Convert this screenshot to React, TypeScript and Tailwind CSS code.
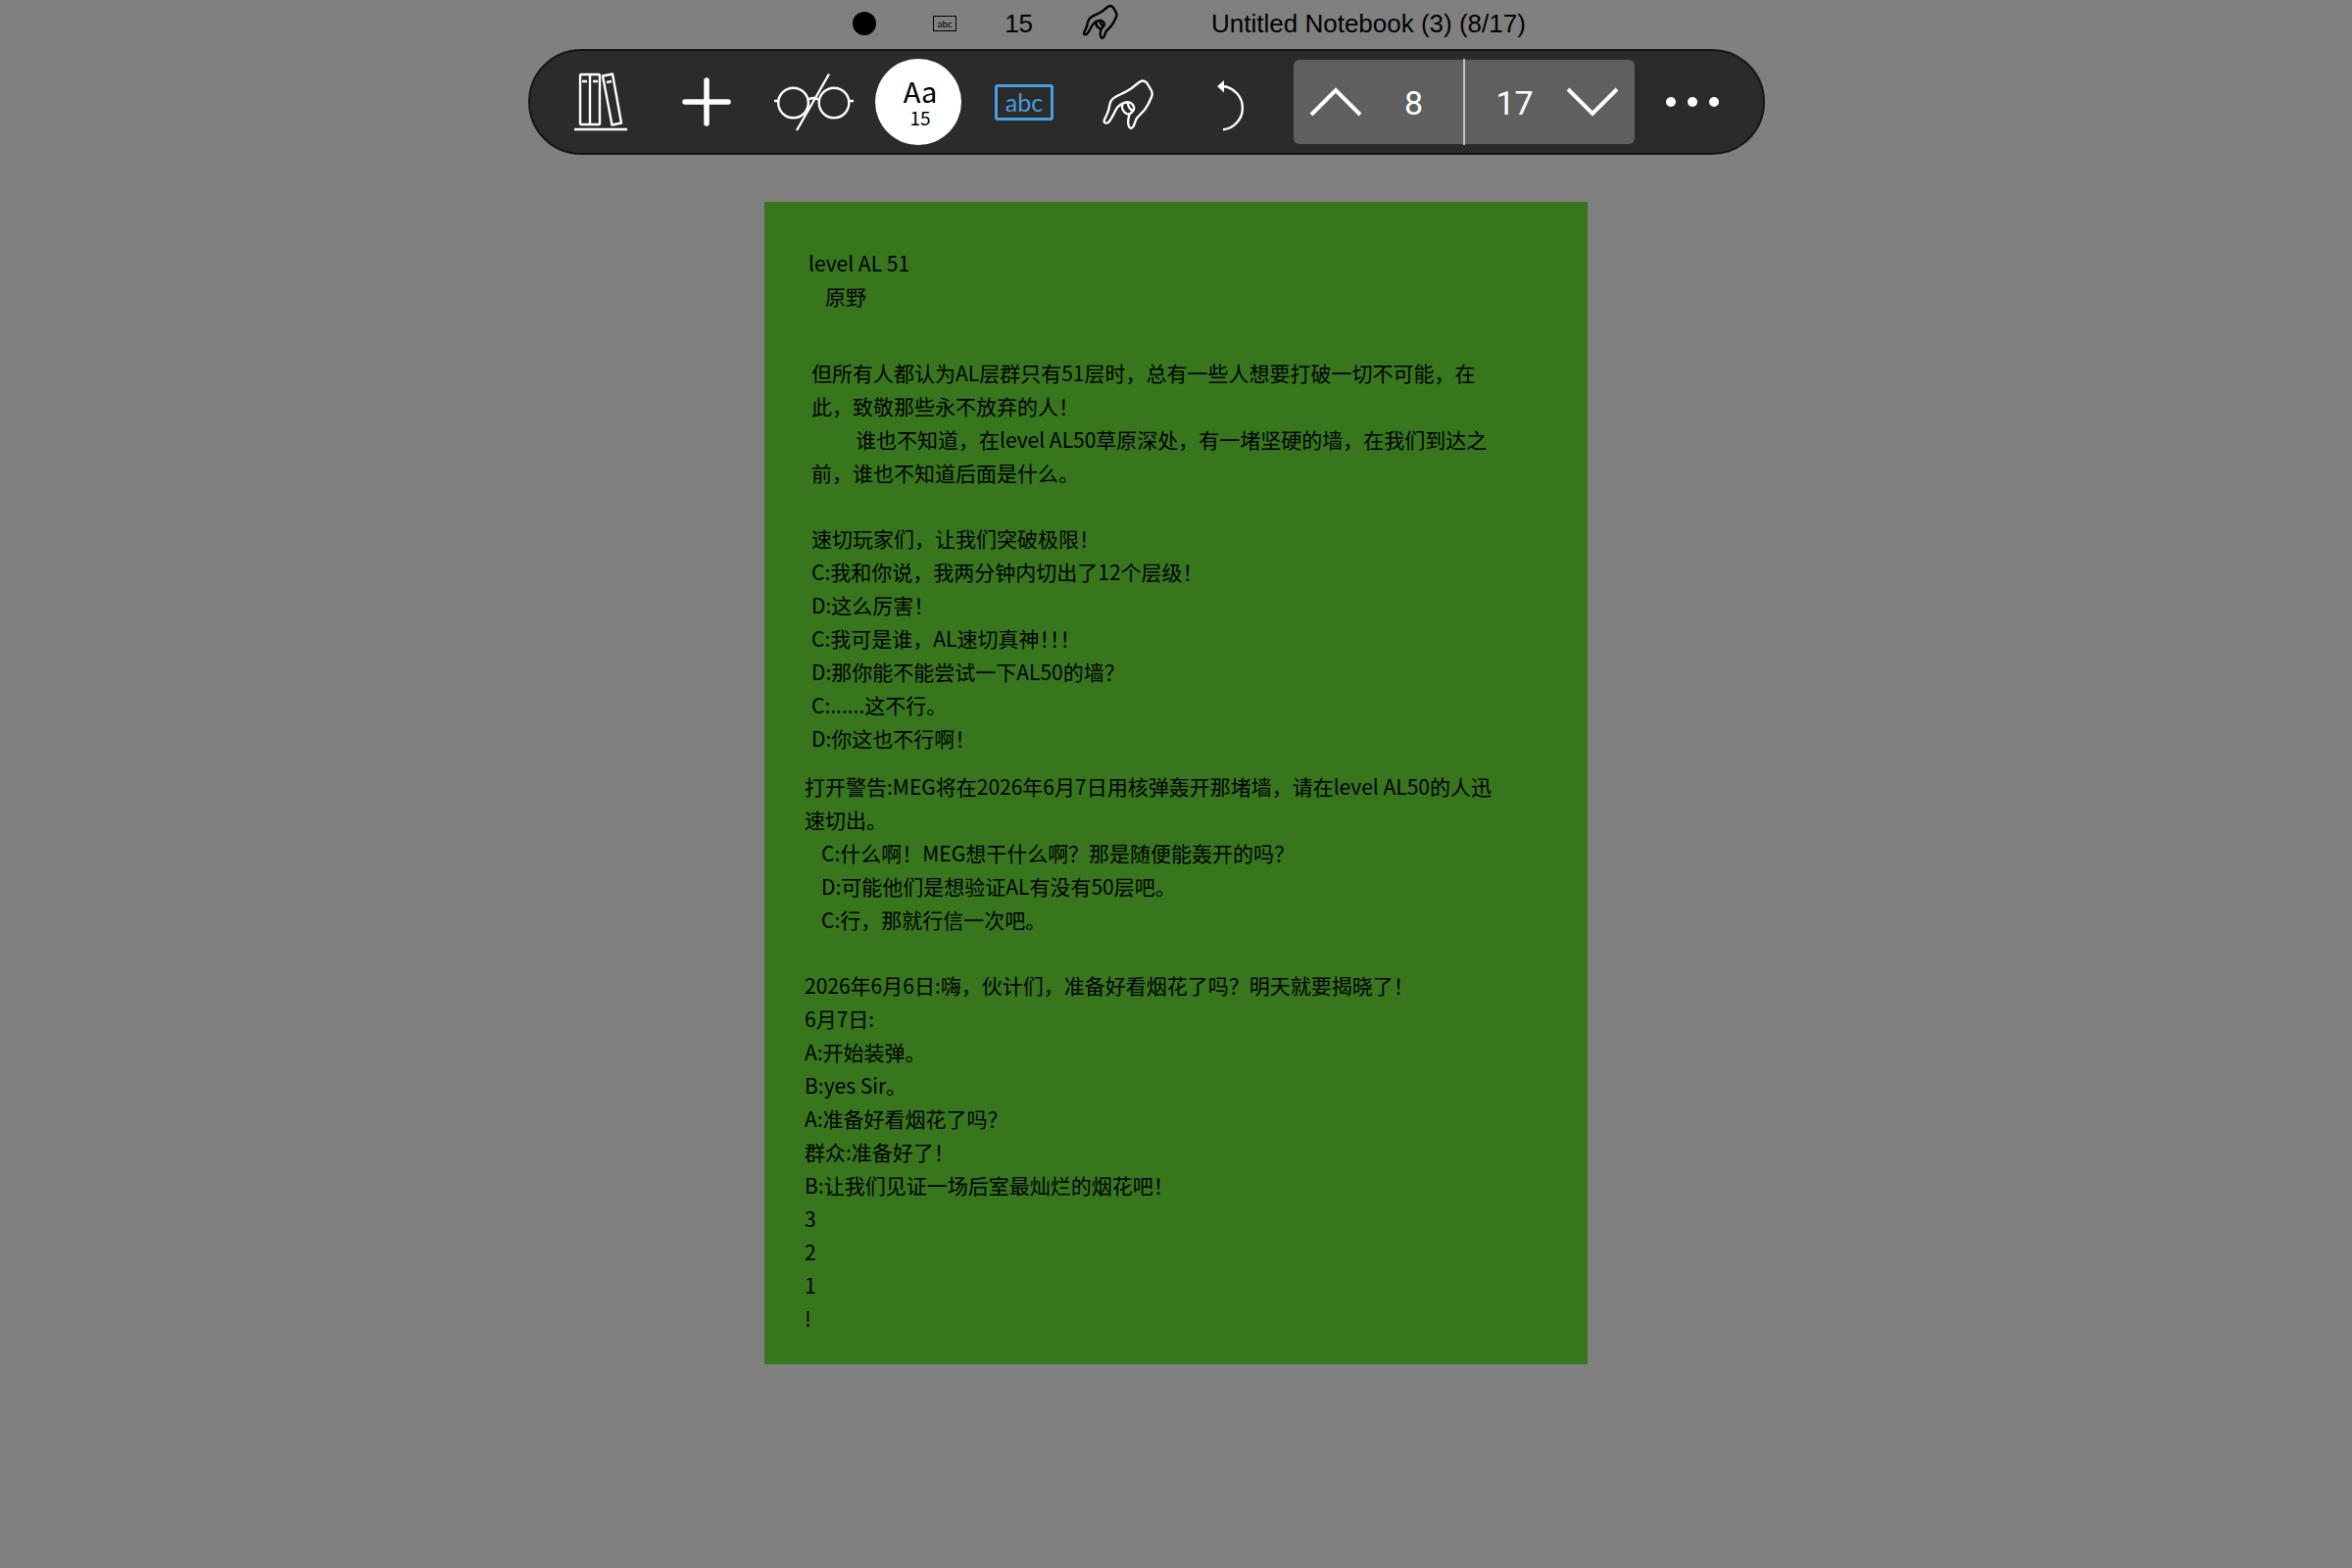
import type { ReactNode } from "react";
import clsx from "clsx";

const HAND_PATH =
  "M31 65.5 C28 66 27 64.500 28 62 C30 58 31.500 55 32.500 51 C33.500 46 33.500 42 39 39 C44 36 50 34 55 30.500 L64 23.500 C66.500 22 69.500 22.500 71.500 25 L76 32.500 C77 34.500 77 36.500 76 39 C74 44 72 48 69 52 L61 60.500 C59.500 63 59 66 57.500 69 C56 71.500 53.500 71 53 69 C51 65 52.500 61 53.500 56.500 M31 65.500 C34 64 35.500 60 37.700 55.700 C40 51 42 47 48 45 C51 44 54 44 56 46 C59 48.500 59 51.500 56 54.500 C54.500 56.500 53 57 50.500 56 C47 54 45 50 46.500 46 M52 44.500 C51.500 48 54 52 57 53";

type Line = { text: ReactNode; className?: string };

const intro: Line[] = [
  { text: "但所有人都认为AL层群只有51层时，总有一些人想要打破一切不可能，在此，致敬那些永不放弃的人！" },
  { text: "谁也不知道，在level AL50草原深处，有一堵坚硬的墙，在我们到达之前，谁也不知道后面是什么。", className: "indent-[45px]" },
];

const players: Line[] = [
  { text: "速切玩家们，让我们突破极限！" },
  { text: "C:我和你说，我两分钟内切出了12个层级！" },
  { text: "D:这么厉害！" },
  {
    text: (
      <>
        C:我可是谁，AL速切真神<span className="[font-feature-settings:'halt']">！！！</span>
      </>
    ),
  },
  { text: "D:那你能不能尝试一下AL50的墙？" },
  { text: "C:......这不行。" },
  { text: "D:你这也不行啊！" },
];

const warning: Line[] = [
  { text: "打开警告:MEG将在2026年6月7日用核弹轰开那堵墙，请在level AL50的人迅速切出。" },
  { text: "C:什么啊！MEG想干什么啊？那是随便能轰开的吗？", className: "pl-[17px]" },
  { text: "D:可能他们是想验证AL有没有50层吧。", className: "pl-[17px]" },
  { text: "C:行，那就行信一次吧。", className: "pl-[17px]" },
];

const countdown: Line[] = [
  { text: "2026年6月6日:嗨，伙计们，准备好看烟花了吗？明天就要揭晓了！" },
  { text: "6月7日:" },
  { text: "A:开始装弹。" },
  { text: "B:yes Sir。" },
  { text: "A:准备好看烟花了吗？" },
  { text: "群众:准备好了！" },
  { text: "B:让我们见证一场后室最灿烂的烟花吧！" },
  { text: "3" },
  { text: "2" },
  { text: "1" },
  { text: "!" },
];

function Lines({ lines, className }: { lines: Line[]; className?: string }) {
  return (
    <div className={clsx("max-w-[702px]", className)}>
      {lines.map((line, i) => (
        <p key={i} className={line.className}>
          {line.text}
        </p>
      ))}
    </div>
  );
}

function ToolButton({ label, children }: { label: string; children: ReactNode }) {
  return (
    <button
      type="button"
      aria-label={label}
      className="flex h-[88px] w-[108px] shrink-0 items-center justify-center"
    >
      {children}
    </button>
  );
}

// All toolbar drawings share one 108x88 box
function Icon({ children, width = 2.4 }: { children: ReactNode; width?: number }) {
  return (
    <svg
      viewBox="0 0 108 88"
      className="h-[88px] w-[108px]"
      fill="none"
      stroke="currentColor"
      strokeWidth={width}
      strokeLinejoin="round"
    >
      {children}
    </svg>
  );
}

function StatusBar() {
  return (
    <div className="flex h-12 items-center justify-center pl-[27px] font-['Liberation_Sans',sans-serif] text-[26px] text-black">
      <span className="size-6 rounded-full bg-black" />
      <span className="ml-[58px] flex h-4 w-6 items-center justify-center border border-black font-[Lato,sans-serif] text-[10px] leading-none">
        abc
      </span>
      <span className="ml-[49px]">15</span>
      <svg
        viewBox="26 20 53 52"
        className="ml-[51px] -mt-1 h-9 w-9"
        fill="none"
        stroke="currentColor"
        strokeWidth="3.5"
        strokeLinejoin="round"
      >
        <path d={HAND_PATH} />
      </svg>
      <span className="ml-[95px]">Untitled Notebook (3) (8/17)</span>
    </div>
  );
}

function PageNav() {
  return (
    <div className="mx-[5px] flex h-[86px] w-[348px] shrink-0 rounded-md bg-[#5f5f5f] font-[Roboto,sans-serif] text-[34px]">
      <button type="button" aria-label="Previous page" className="w-[86px]">
        <svg viewBox="0 0 86 86" className="size-[86px]" fill="none" stroke="currentColor" strokeWidth="4">
          <path d="M18 56 L43 31 L68 56" />
        </svg>
      </button>
      <span className="flex flex-1 items-center justify-center pt-0.5 pr-3.5">8</span>
      <span className="-my-px w-0.5 bg-[#c4c4c4]" />
      <span className="flex flex-1 items-center justify-center pt-0.5 pl-3.5">17</span>
      <button type="button" aria-label="Next page" className="w-[86px]">
        <svg viewBox="0 0 86 86" className="size-[86px]" fill="none" stroke="currentColor" strokeWidth="4">
          <path d="M18 30 L43 55 L68 30" />
        </svg>
      </button>
    </div>
  );
}

function Toolbar() {
  return (
    <div className="mt-0.5 flex justify-center pr-[60px]">
      <div
        role="toolbar"
        aria-label="Notebook tools"
        className="flex h-[108px] items-center rounded-full border-2 border-[#151515] bg-[#2b2b2b] px-[18px] text-white"
      >
        <ToolButton label="Library">
          <Icon>
            <rect x="33" y="16" width="20" height="51" rx="1" />
            <path d="M43 16 V67 M35 23 H40 M46 23 H51" />
            <path d="M56 17.5 L66 15.5 L75 65.5 L65.5 67.5 Z M60 24 L65 23" />
            <path d="M27 72 H81" />
          </Icon>
        </ToolButton>
        <ToolButton label="Add">
          <Icon width={5.5}>
            <path d="M32 44 H76 M54 22 V66" strokeLinecap="round" />
          </Icon>
        </ToolButton>
        <ToolButton label="Reading mode">
          <Icon>
            <circle cx="34.5" cy="45" r="15.3" />
            <circle cx="76" cy="45" r="15.3" />
            <path d="M49 42 Q55 38 61 42 M15 43 H19 M91 43 H96 M71 15.5 L38 73" />
          </Icon>
        </ToolButton>
        <ToolButton label="Text size">
          <span className="flex size-[88px] flex-col items-center justify-center rounded-full bg-white pl-1 font-['Noto_Sans_CJK_SC',sans-serif] text-black">
            <span className="text-[29px] leading-8">Aa</span>
            <span className="text-[19px] leading-6">15</span>
          </span>
        </ToolButton>
        <ToolButton label="Text box">
          <span className="flex h-[37px] w-[60px] items-center justify-center rounded-[3px] border-3 border-[#4a9edc] font-[Lato,sans-serif] text-[25px] leading-8 text-[#4a9edc]">
            abc
          </span>
        </ToolButton>
        <ToolButton label="Finger drawing">
          <Icon>
            <path d={HAND_PATH} />
          </Icon>
        </ToolButton>
        <ToolButton label="Undo">
          <Icon>
            <path d="M41 28 A22.5 22.3 0 0 1 41 72.3" />
            <path d="M35 28 L42 22 V34.5 Z" fill="currentColor" stroke="none" />
          </Icon>
        </ToolButton>
        <PageNav />
        <ToolButton label="More">
          <Icon>
            <g fill="currentColor" stroke="none">
              <circle cx="32" cy="44" r="5" />
              <circle cx="54" cy="44" r="5" />
              <circle cx="76" cy="44" r="5" />
            </g>
          </Icon>
        </ToolButton>
      </div>
    </div>
  );
}

export default function App() {
  return (
    <div className="min-h-screen bg-[#808080]">
      <header>
        <StatusBar />
        <Toolbar />
      </header>
      <main className="pt-12 pb-12">
        <article
          lang="zh-CN"
          className="mx-auto max-w-[840px] bg-[#38761d] pt-[45px] pb-[30px] font-['Noto_Sans_CJK_SC',sans-serif] text-[21px] leading-[34px] text-black"
        >
          <section className="pl-[45px]">
            <h1>level AL 51</h1>
            <p className="pl-[17px]">原野</p>
          </section>
          <section className="mt-11 pl-12">
            <Lines lines={intro} />
            <Lines lines={players} className="mt-[33px]" />
          </section>
          <section className="mt-[15px] pl-[41px]">
            <Lines lines={warning} />
            <Lines lines={countdown} className="mt-[33px]" />
          </section>
        </article>
      </main>
    </div>
  );
}
